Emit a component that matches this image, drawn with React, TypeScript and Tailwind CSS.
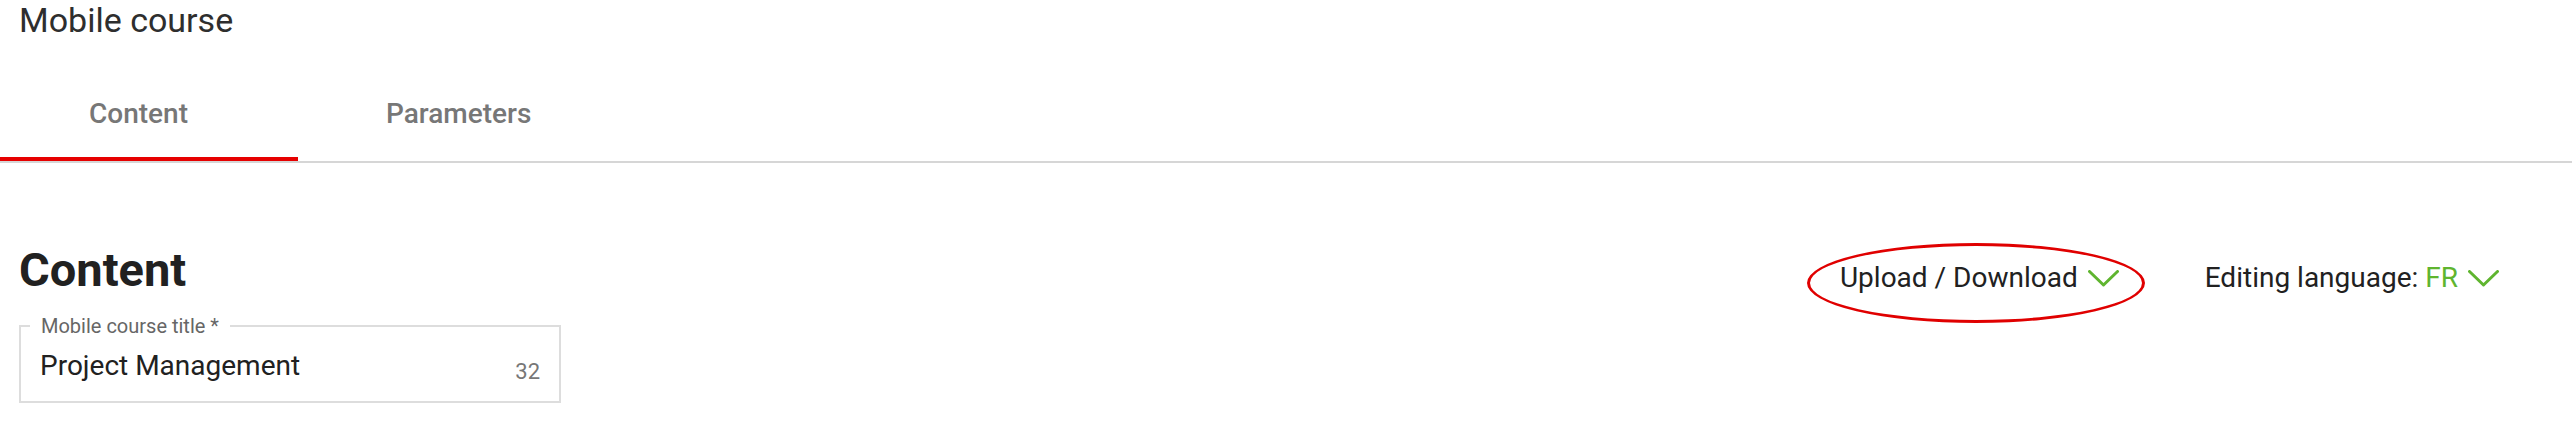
import React from 'react';

const Chevron: React.FC = () => (
  <svg width="31" height="17" viewBox="0 0 31 17" fill="none" className="shrink-0">
    <polyline points="1.5,1.5 15.5,15 29.5,1.5" stroke="#5fb52f" strokeWidth="3" strokeLinecap="round" strokeLinejoin="round" />
  </svg>
);

const App: React.FC = () => {
  return (
    <div className="w-full h-[442px] bg-white text-[#212121]" style={{ fontFamily: 'Roboto, "Noto Sans", sans-serif' }}>
      {/* Page title */}
      <div className="h-[40px] pl-[19px] text-[34px] leading-[40px] text-[#2e2e2e]">Mobile course</div>

      {/* Tabs */}
      <div className="flex border-b-2 border-[#d6d6d6]">
        <button className="w-[298px] h-[121px] flex flex-col text-left">
          <span className="pl-[89px] pt-[60px] text-[28px] leading-[28px] font-medium text-[#777777]">Content</span>
          <span className="mt-auto h-[4px] w-full bg-[#e60000]" />
        </button>
        <button className="h-[121px] flex flex-col text-left">
          <span className="pl-[88px] pt-[60px] text-[28px] leading-[28px] font-medium text-[#777777]">Parameters</span>
        </button>
      </div>

      {/* Content section */}
      <div className="pl-[19px] pr-[73px] pt-[83px]">
        <div className="flex items-start justify-between">
          <h1 className="text-[47px] leading-[47px] font-bold text-[#212121]">Content</h1>
          <div className="flex items-center mt-[18px]">
            <button className="relative flex items-center gap-[10px] text-[28px] leading-[28px]">
              <span className="pointer-events-none absolute left-[-33px] top-[-21px] w-[338px] h-[80px] rounded-[50%] border-[3px] border-[#e00000]" />
              <span>Upload / Download</span>
              <Chevron />
            </button>
            <button className="ml-[86px] flex items-center gap-[10px] text-[28px] leading-[28px]">
              <span>
                Editing language: <span className="text-[#5fb52f]">FR</span>
              </span>
              <Chevron />
            </button>
          </div>
        </div>

        <fieldset className="mt-[23px] w-[542px] border-2 border-[#dddddd] pl-[9px] pr-[19px] pt-[16px] pb-[18px]">
          <legend className="px-[11px] text-[20px] leading-[20px] text-[#666666]">Mobile course title *</legend>
          <div className="flex items-start justify-between pl-[10px]">
            <span className="text-[28px] leading-[28px] text-[#212121]">Project Management</span>
            <span className="mt-[9px] text-[22px] leading-[22px] text-[#777777]">32</span>
          </div>
        </fieldset>
      </div>
    </div>
  );
};

export default App;
